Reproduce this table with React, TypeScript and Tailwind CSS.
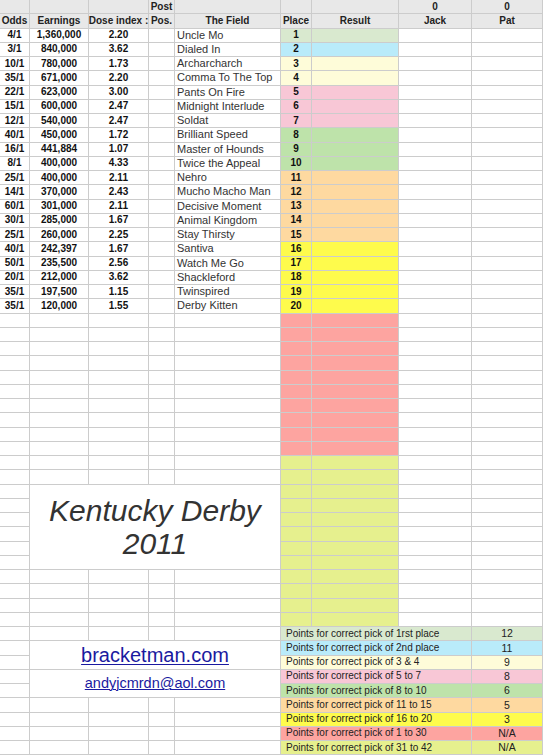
import React from "react";

const data: [string, string, string, string][] = [
  ["4/1", "1,360,000", "2.20", "Uncle Mo"],
  ["3/1", "840,000", "3.62", "Dialed In"],
  ["10/1", "780,000", "1.73", "Archarcharch"],
  ["35/1", "671,000", "2.20", "Comma To The Top"],
  ["22/1", "623,000", "3.00", "Pants On Fire"],
  ["15/1", "600,000", "2.47", "Midnight Interlude"],
  ["12/1", "540,000", "2.47", "Soldat"],
  ["40/1", "450,000", "1.72", "Brilliant Speed"],
  ["16/1", "441,884", "1.07", "Master of Hounds"],
  ["8/1", "400,000", "4.33", "Twice the Appeal"],
  ["25/1", "400,000", "2.11", "Nehro"],
  ["14/1", "370,000", "2.43", "Mucho Macho Man"],
  ["60/1", "301,000", "2.11", "Decisive Moment"],
  ["30/1", "285,000", "1.67", "Animal Kingdom"],
  ["25/1", "260,000", "2.25", "Stay Thirsty"],
  ["40/1", "242,397", "1.67", "Santiva"],
  ["50/1", "235,500", "2.56", "Watch Me Go"],
  ["20/1", "212,000", "3.62", "Shackleford"],
  ["35/1", "197,500", "1.15", "Twinspired"],
  ["35/1", "120,000", "1.55", "Derby Kitten"],
];

function placeColor(p: number): string {
  if (p === 1) return "bg-[#d9e9cf]";
  if (p === 2) return "bg-[#b9ebfa]";
  if (p <= 4) return "bg-[#fefcd9]";
  if (p <= 7) return "bg-[#f8c7d6]";
  if (p <= 10) return "bg-[#bee3aa]";
  if (p <= 15) return "bg-[#fed9a0]";
  if (p <= 20) return "bg-[#fefb4c]";
  if (p <= 30) return "bg-[#fda4a0]";
  return "bg-[#e6f08e]";
}

const legend: [string, string, string][] = [
  ["Points for correct pick of 1rst place", "12", "bg-[#d9e9cf]"],
  ["Points for correct pick of 2nd place", "11", "bg-[#b9ebfa]"],
  ["Points for correct pick of 3 & 4", "9", "bg-[#fefcd9]"],
  ["Points for correct pick of 5 to 7", "8", "bg-[#f8c7d6]"],
  ["Points for correct pick of 8 to 10", "6", "bg-[#bee3aa]"],
  ["Points for correct pick of 11 to 15", "5", "bg-[#fed9a0]"],
  ["Points for correct pick of 16 to 20", "3", "bg-[#fefb4c]"],
  ["Points for correct pick of 1 to 30", "N/A", "bg-[#fda4a0]"],
  ["Points for correct pick of 31 to 42", "N/A", "bg-[#e6f08e]"],
];

const base =
  "border-r border-b border-[#cccccc] flex items-center whitespace-nowrap leading-none min-w-0";

function C({
  children,
  className = "",
}: {
  children?: React.ReactNode;
  className?: string;
}) {
  return <div className={`${base} ${className}`}>{children}</div>;
}

export default function App() {
  const cells: React.ReactNode[] = [];
  let k = 0;
  const push = (n: React.ReactNode) => {
    cells.push(<React.Fragment key={k++}>{n}</React.Fragment>);
  };
  const hdr = "bg-[#e8e8e8] justify-center font-bold text-[10px] text-[#222]";

  // header row 0
  ["", "", "", "Post", "", "", "", "0", "0"].forEach((t) =>
    push(<C className={hdr}>{t}</C>)
  );
  // header row 1
  ["Odds", "Earnings", "Dose index :", "Pos.", "The Field", "Place", "Result", "Jack", "Pat"].forEach((t) =>
    push(<C className={hdr}>{t}</C>)
  );

  const bold = "justify-center font-bold text-[10px] text-[#111]";

  // data rows
  data.forEach((r, i) => {
    const p = i + 1;
    push(<C className={bold}>{r[0]}</C>);
    push(<C className={bold}>{r[1]}</C>);
    push(<C className={bold}>{r[2]}</C>);
    push(<C />);
    push(<C className="pl-[2px] text-[11px] text-[#333]">{r[3]}</C>);
    push(<C className={`${bold} ${placeColor(p)}`}>{p}</C>);
    push(<C className={placeColor(p)} />);
    push(<C />);
    push(<C />);
  });

  // empty rows 21..42 (grid rows 22..43)
  for (let p = 21; p <= 42; p++) {
    const gridRow = p + 1;
    push(<C />);
    if (gridRow === 34) {
      push(
        <C className="col-span-4 row-span-6 justify-center bg-white">
          <div className="text-center italic text-[30px] leading-[33px] text-[#333] whitespace-normal">
            Kentucky Derby
            <br />
            2011
          </div>
        </C>
      );
    } else if (!(gridRow > 34 && gridRow <= 39)) {
      push(<C />);
      push(<C />);
      push(<C />);
      push(<C />);
    }
    push(<C className={placeColor(p)} />);
    push(<C className={placeColor(p)} />);
    push(<C />);
    push(<C />);
  }

  // legend rows (grid rows 44..52)
  legend.forEach((l, i) => {
    const gridRow = 44 + i;
    push(<C />);
    if (gridRow === 45) {
      push(
        <C className="col-span-4 row-span-2 justify-center">
          <span className="text-[20px] text-[#1a1aa0] underline underline-offset-2 decoration-1">
            bracketman.com
          </span>
        </C>
      );
    } else if (gridRow === 47) {
      push(
        <C className="col-span-4 row-span-2 justify-center">
          <span className="text-[14.5px] text-[#1a1aa0] underline underline-offset-1 decoration-1">
            andyjcmrdn@aol.com
          </span>
        </C>
      );
    } else if (gridRow === 46 || gridRow === 48) {
      // occupied by merged cells
    } else {
      push(<C />);
      push(<C />);
      push(<C />);
      push(<C />);
    }
    push(
      <C className={`col-span-3 pl-[5px] text-[10px] text-[#222] ${l[2]}`}>{l[0]}</C>
    );
    push(<C className={`justify-center text-[10.5px] text-[#222] ${l[2]}`}>{l[1]}</C>);
  });

  return (
    <div
      className="w-[544px] h-[756px] bg-white overflow-hidden"
      style={{ fontFamily: '"Liberation Sans", Arial, sans-serif' }}
    >
      <div className="grid grid-cols-[30px_59px_60px_26px_106px_31px_87px_73px_71px] auto-rows-[14.25px]">
        {cells}
      </div>
    </div>
  );
}
